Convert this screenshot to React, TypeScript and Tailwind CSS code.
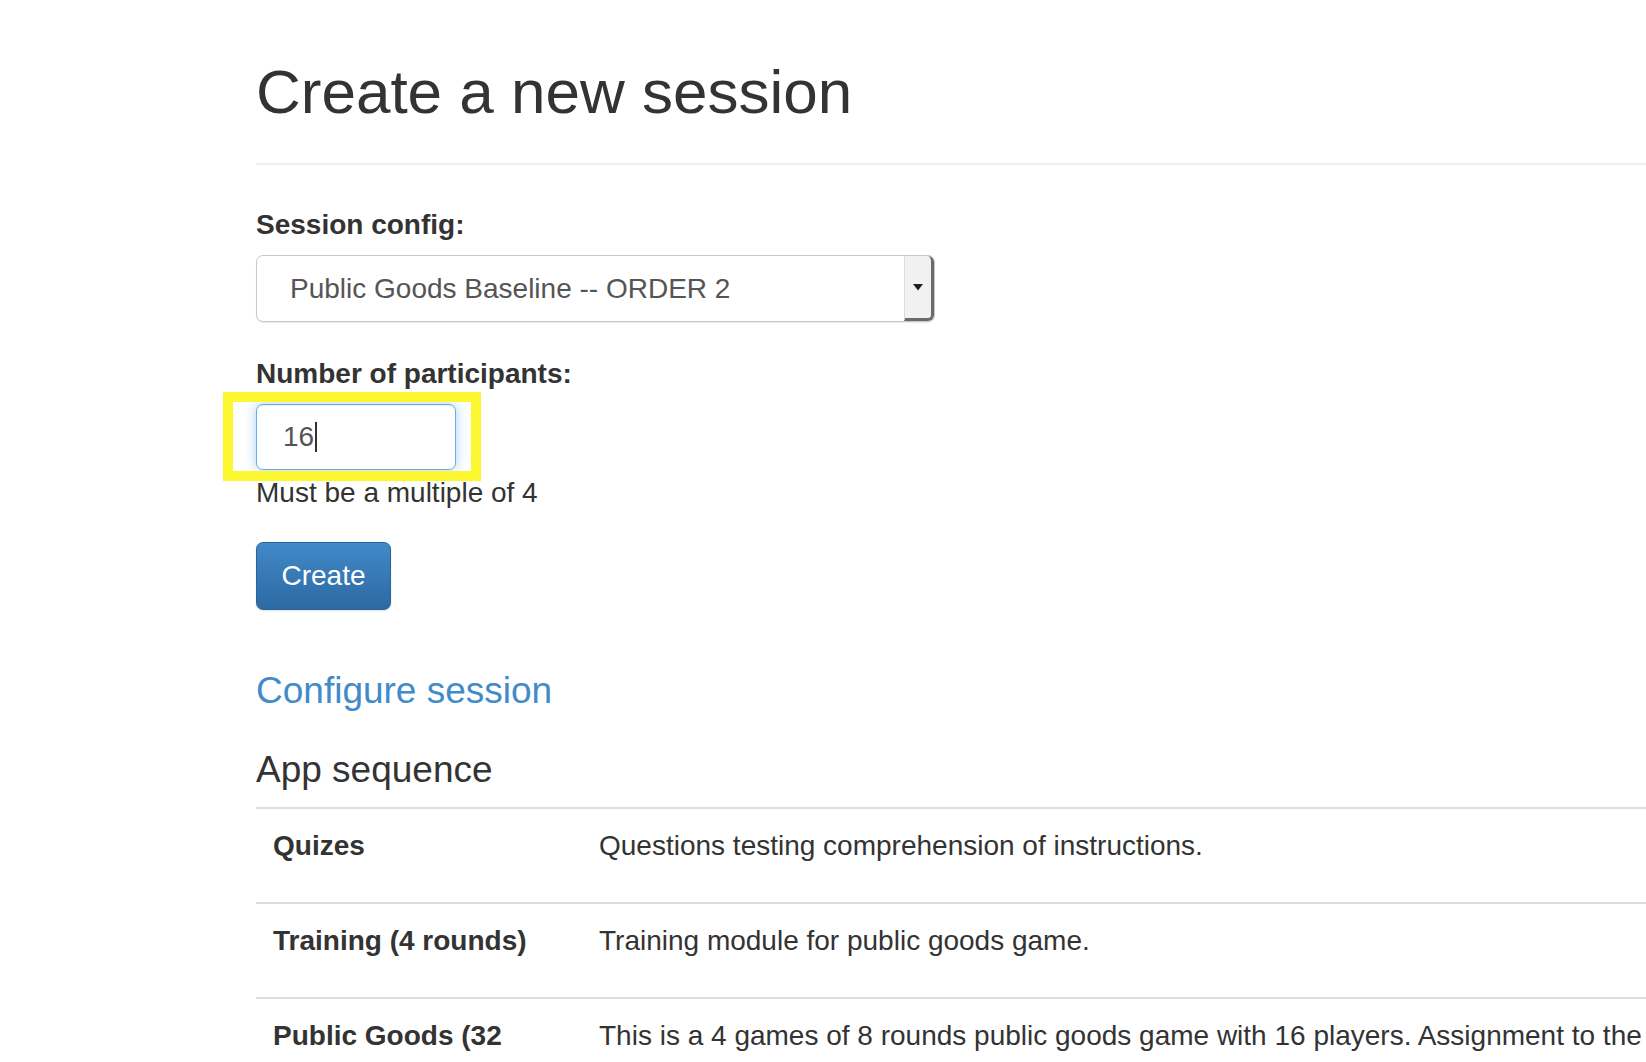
import React from "react";

const apps = [
  {
    name: "Quizes",
    doc: "Questions testing comprehension of instructions.",
  },
  {
    name: "Training (4 rounds)",
    doc: "Training module for public goods game.",
  },
  {
    name: "Public Goods (32 rounds)",
    doc: "This is a 4 games of 8 rounds public goods game with 16 players. Assignment to the groups is random and reshuffled between games.",
  },
];

function SelectArrow() {
  return (
    <svg width="10" height="7" viewBox="0 0 10 7" className="block">
      <path d="M0 0 L10 0 L5 6.5 Z" fill="#1f1f1f" />
    </svg>
  );
}

export default function App() {
  return (
    <div className="min-h-screen w-full overflow-hidden bg-white font-['Liberation_Sans',Arial,sans-serif] text-[#333333]">
      <div className="ml-[256px] w-[1460px] pt-[58px]">
        <h1 className="text-[62px] leading-[68px] font-medium">Create a new session</h1>
        <div className="mt-[37px] h-[2px] bg-[#eeeeee]" />

        {/* form */}
        <label className="mt-[40px] block text-[28px] leading-[40px] font-bold">Session config:</label>
        <div className="mt-[10px] flex h-[67px] w-[679px] items-stretch rounded-[7px] border border-[#c8c8c8] bg-white shadow-[0_1px_1px_rgba(0,0,0,0.08)]">
          <div className="flex flex-1 items-center pl-[33px] text-[28px] text-[#555555]">
            Public Goods Baseline -- ORDER 2
          </div>
          <div className="flex w-[30px] items-center justify-center rounded-r-[6px] border-l border-[#dcdcdc] border-r-[3px] border-b-[3px] border-r-[#6a6a6a] border-b-[#6a6a6a] bg-[#f1f1f1]">
            <SelectArrow />
          </div>
        </div>

        <label className="mt-[32px] block text-[28px] leading-[40px] font-bold">Number of participants:</label>
        <div className="relative mt-[10px] w-[200px]">
          <div className="flex h-[66px] w-[200px] items-center rounded-[7px] border border-[#66afe9] bg-white pl-[26px] text-[28px] text-[#555555] shadow-[inset_0_1px_1px_rgba(0,0,0,0.075),0_0_12px_rgba(102,175,233,0.6)]">
            16
            <span className="ml-[1px] inline-block h-[30px] w-[2px] bg-[#333333]" />
          </div>
          {/* highlight annotation */}
          <div className="pointer-events-none absolute left-[-33px] top-[-12px] h-[89px] w-[258px] border-[10px] border-[#fdf731]" />
        </div>
        <p className="mt-[3px] text-[28px] leading-[40px]">Must be a multiple of 4</p>

        <button className="mt-[29px] flex h-[68px] w-[135px] items-center justify-center rounded-[7px] border border-[#2a6497] bg-gradient-to-b from-[#4289c9] to-[#2c6aa2] text-[28px] text-white shadow-[0_1px_2px_rgba(0,0,0,0.12)]">
          Create
        </button>

        <h2 className="mt-[60px] text-[37px] leading-[41px] font-medium text-[#428bca]">Configure session</h2>

        <h3 className="mt-[38px] text-[37px] leading-[41px] font-medium">App sequence</h3>
        <table className="mt-[17px] w-full border-collapse text-[28px] leading-[40px]">
          <tbody>
            {apps.map((a) => (
              <tr key={a.name} className="border-t-2 border-[#dddddd]">
                <td className="w-[327px] px-[17px] pt-[17px] pb-[36px] align-top font-bold">{a.name}</td>
                <td className="px-[16px] pt-[17px] pb-[36px] align-top">{a.doc}</td>
              </tr>
            ))}
          </tbody>
        </table>
      </div>
    </div>
  );
}
